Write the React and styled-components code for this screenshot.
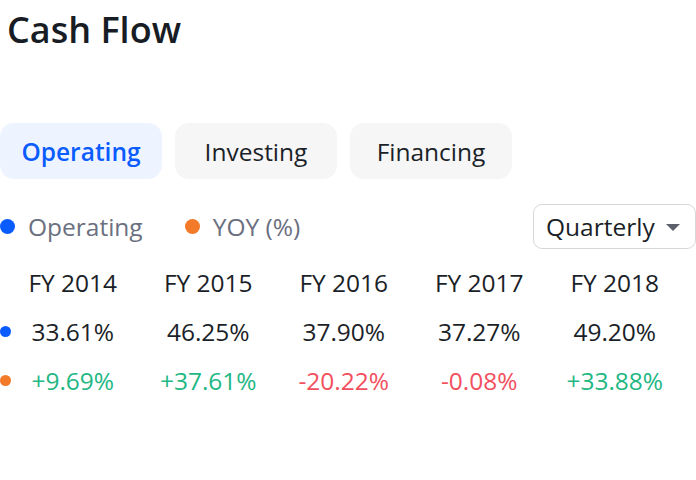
import React from "react";
import styled, { createGlobalStyle } from "styled-components";

const Global = createGlobalStyle`
  html, body { margin: 0; padding: 0; background: #fff; }
  body { font-family: "Open Sans", "Noto Sans", sans-serif; color: #181c25; }
`;

const Page = styled.div`
  width: 696px;
  height: 480px;
  overflow: hidden;
`;

const Title = styled.h1`
  margin: 0;
  padding: 4px 0 0 7px;
  font-size: 36px;
  line-height: 52px;
  font-weight: 600;
  color: #181c25;
`;

const Tabs = styled.div`
  display: flex;
  gap: 13px;
  margin-top: 67px;
`;

const Tab = styled.button`
  width: 162px;
  height: 56px;
  border: none;
  border-radius: 14px;
  font-family: inherit;
  font-size: 24.5px;
  background: ${(p) => (p.$active ? "#eef4ff" : "#f6f6f7")};
  color: ${(p) => (p.$active ? "#0a5cff" : "#1b1f28")};
  font-weight: ${(p) => (p.$active ? 600 : 400)};
  padding: 0;
`;

const LegendRow = styled.div`
  display: flex;
  align-items: center;
  margin-top: 25px;
  height: 44px;
`;

const LegendItem = styled.div`
  display: flex;
  align-items: center;
  gap: 13px;
  margin-right: 42px;
  font-size: 24.5px;
  color: #6b7080;
`;

const Dot = styled.span`
  display: inline-block;
  width: ${(p) => p.$size}px;
  height: ${(p) => p.$size}px;
  border-radius: 50%;
  background: ${(p) => p.$color};
  flex: none;
`;

const Select = styled.div`
  margin-left: auto;
  width: 163px;
  height: 45px;
  box-sizing: border-box;
  border: 1px solid #d6d8dc;
  border-radius: 9px;
  display: flex;
  align-items: center;
  gap: 11px;
  padding: 0 0 0 12px;
  font-size: 24.5px;
  color: #1b1f28;
`;

const Caret = styled.span`
  width: 0;
  height: 0;
  border-left: 7px solid transparent;
  border-right: 7px solid transparent;
  border-top: 7px solid #5d606a;
  margin-top: 2px;
`;

const Table = styled.div`
  display: grid;
  grid-template-columns: 5px repeat(5, 135.5px);
  margin-top: 10px;
`;

const Cell = styled.div`
  height: 49px;
  display: flex;
  align-items: center;
  justify-content: center;
  font-size: 24.5px;
  color: ${(p) => p.$color || "#1b1f28"};
`;

const DotCell = styled.div`
  height: 49px;
  display: flex;
  align-items: center;
`;

const years = ["FY 2014", "FY 2015", "FY 2016", "FY 2017", "FY 2018"];
const ops = ["33.61%", "46.25%", "37.90%", "37.27%", "49.20%"];
const yoy = ["+9.69%", "+37.61%", "-20.22%", "-0.08%", "+33.88%"];
const GREEN = "#22b783";
const RED = "#f2505e";

export default function App() {
  return (
    <Page>
      <Global />
      <Title>Cash Flow</Title>
      <Tabs>
        <Tab $active>Operating</Tab>
        <Tab>Investing</Tab>
        <Tab>Financing</Tab>
      </Tabs>
      <LegendRow>
        <LegendItem>
          <Dot $size={15} $color="#0a5cff" />
          Operating
        </LegendItem>
        <LegendItem>
          <Dot $size={15} $color="#f27a28" />
          YOY (%)
        </LegendItem>
        <Select>
          Quarterly
          <Caret />
        </Select>
      </LegendRow>
      <Table>
        <DotCell />
        {years.map((y) => (
          <Cell key={y}>{y}</Cell>
        ))}
        <DotCell>
          <Dot $size={11} $color="#0a5cff" />
        </DotCell>
        {ops.map((v, i) => (
          <Cell key={i}>{v}</Cell>
        ))}
        <DotCell>
          <Dot $size={11} $color="#f27a28" />
        </DotCell>
        {yoy.map((v, i) => (
          <Cell key={i} $color={v.startsWith("+") ? GREEN : RED}>
            {v}
          </Cell>
        ))}
      </Table>
    </Page>
  );
}
